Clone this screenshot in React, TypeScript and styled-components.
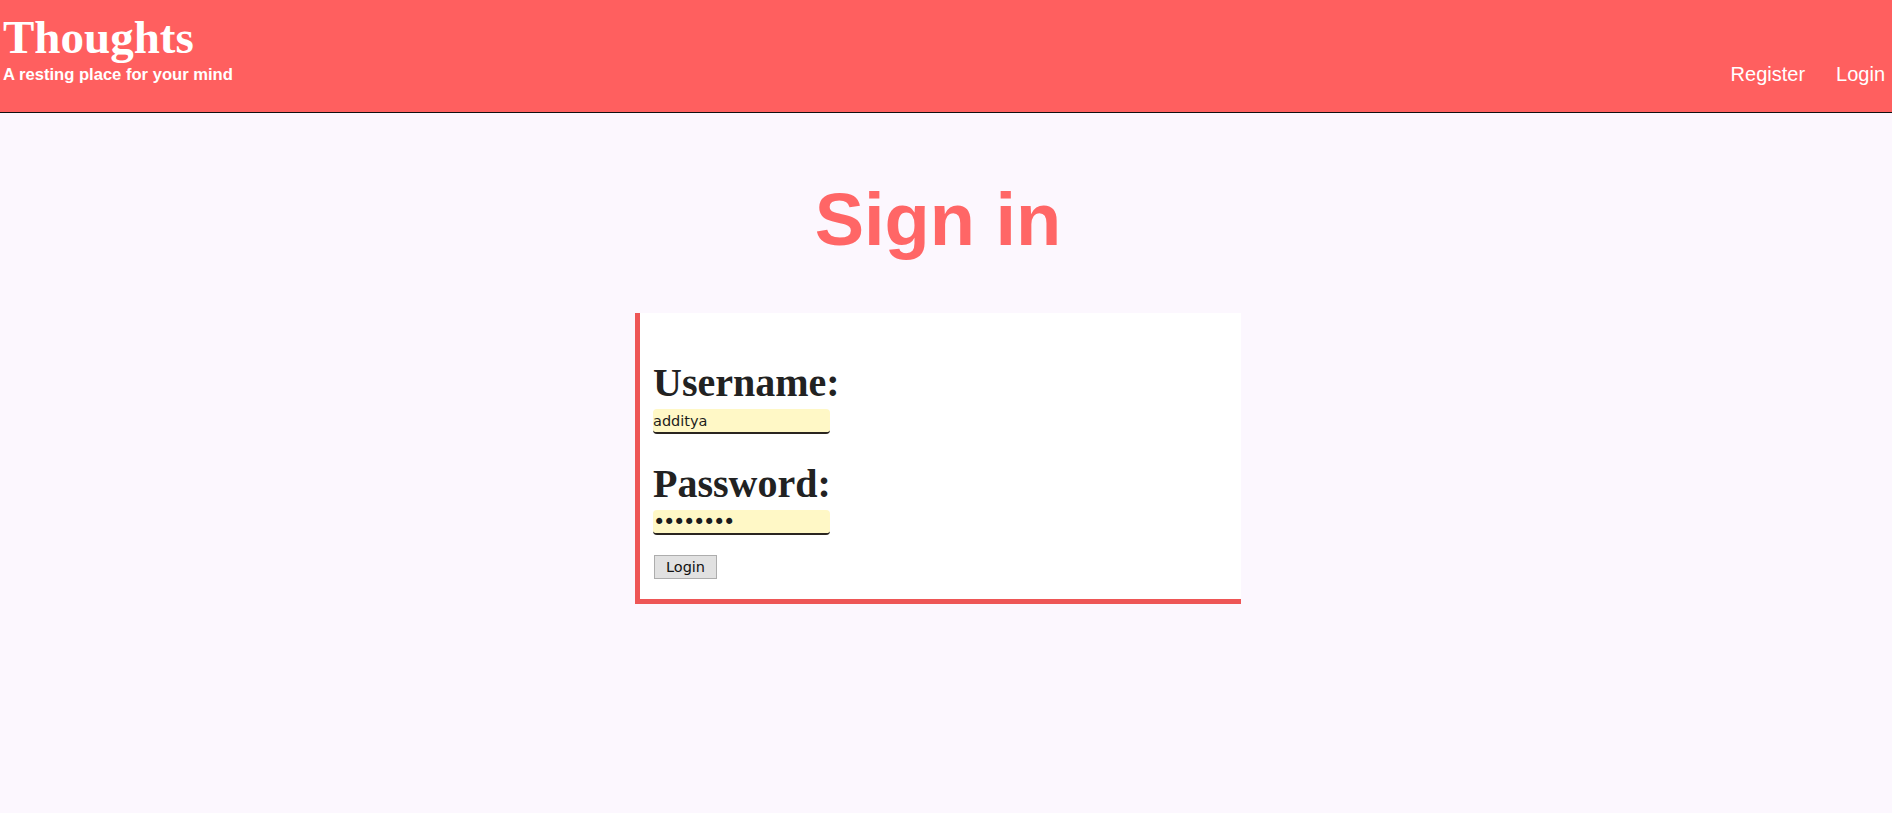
import React from 'react';
import styled, { createGlobalStyle } from 'styled-components';

const GlobalStyle = createGlobalStyle`
    html, body {
        margin: 0;
        padding: 0;
        background-color: #fcf7fe;
    }
`;

const Header = styled.header`
    display: flex;
    justify-content: space-between;
    align-items: flex-end;
    height: 113px;
    padding: 0 7px 0 3px;
    box-sizing: border-box;
    background-color: #ff5f5f;
    border-bottom: 1px solid #111;
`;

/* 로고 */
const Brand = styled.div`
    display: flex;
    flex-direction: column;
    align-self: flex-start;
    padding-top: 12px;
`;

const BrandTitle = styled.h1`
    margin: 0;
    font-family: 'Liberation Serif', serif;
    font-size: 47px;
    font-weight: 700;
    line-height: 50px;
    color: #fff;
`;

const BrandSub = styled.span`
    margin-top: 4px;
    font-family: 'Liberation Sans', sans-serif;
    font-size: 16.6px;
    font-weight: 700;
    line-height: 18px;
    color: #fff;
`;

const Nav = styled.nav`
    display: flex;
    gap: 31px;
    padding-bottom: 26px;
`;

const NavLink = styled.a`
    font-family: 'Liberation Sans', sans-serif;
    font-size: 20px;
    line-height: 23px;
    color: #fff;
    text-decoration: none;
`;

const Main = styled.main`
    display: flex;
    flex-direction: column;
    align-items: center;
    padding-right: 16px;
`;

const PageTitle = styled.h2`
    margin: 64px 0 51px;
    font-family: 'Liberation Sans', sans-serif;
    font-size: 74px;
    font-weight: 700;
    line-height: 85px;
    color: #ff6666;
`;

const Card = styled.form`
    display: flex;
    flex-direction: column;
    align-items: flex-start;
    width: 606px;
    box-sizing: border-box;
    padding: 13px 13px 20px;
    background-color: #fff;
    border-left: 5px solid #ee5656;
    border-bottom: 5px solid #ee5656;
`;

const Label = styled.label<{ $top: number }>`
    margin-top: ${props => props.$top}px;
    font-family: 'Liberation Serif', serif;
    font-size: 40px;
    font-weight: 700;
    line-height: 44px;
    color: #222;
`;

const Input = styled.input`
    width: 177px;
    height: 25px;
    margin-top: 4px;
    padding: 0;
    box-sizing: border-box;
    font-family: 'DejaVu Sans', sans-serif;
    font-size: 14.5px;
    color: #1c1c1c;
    background-color: #fff8c6;
    border: none;
    border-bottom: 2px solid #2a2520;
    border-radius: 4px;
    outline: none;

    &[type='password'] {
        font-size: 21px;
        letter-spacing: -2.4px;
        padding-left: 0;
    }
`;

const Button = styled.button`
    margin: 20px 0 0 1px;
    width: 63px;
    height: 24px;
    padding: 0;
    font-family: 'DejaVu Sans', sans-serif;
    font-size: 14.5px;
    color: #111;
    background-color: #e1e1e1;
    border: 1px solid #adadad;
    border-radius: 0;
`;

const App = () => {
    return (
        <>
            <GlobalStyle />
            <Header>
                <Brand>
                    <BrandTitle>Thoughts</BrandTitle>
                    <BrandSub>A resting place for your mind</BrandSub>
                </Brand>
                <Nav>
                    <NavLink href="#">Register</NavLink>
                    <NavLink href="#">Login</NavLink>
                </Nav>
            </Header>
            <Main>
                <PageTitle>Sign in</PageTitle>
                <Card onSubmit={e => e.preventDefault()}>
                    <Label $top={35}>Username:</Label>
                    <Input type="text" defaultValue="additya" />
                    <Label $top={28}>Password:</Label>
                    <Input type="password" defaultValue="password" />
                    <Button type="submit">Login</Button>
                </Card>
            </Main>
        </>
    );
};

export default App;
